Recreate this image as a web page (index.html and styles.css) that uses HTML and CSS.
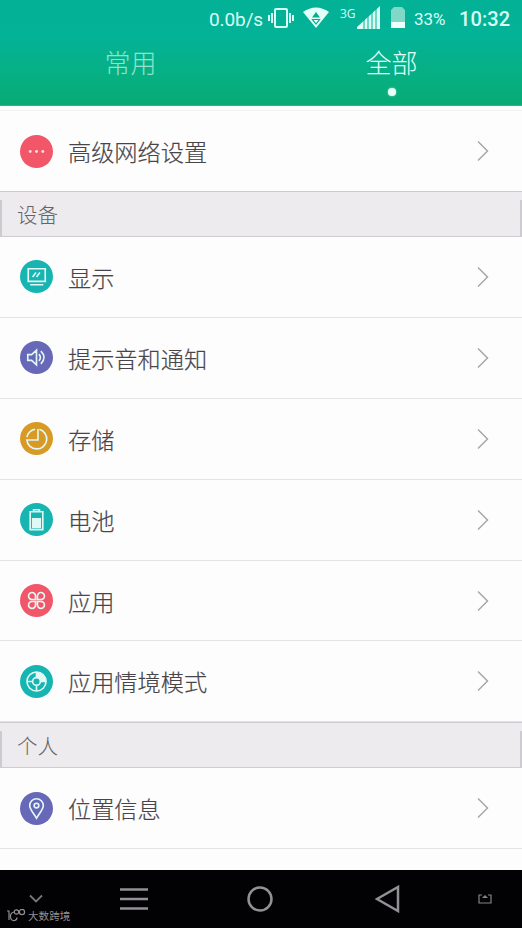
FILE: index.html
```html
<!DOCTYPE html>
<html lang="zh-CN">
<head>
<meta charset="utf-8">
<title>设置</title>
<link rel="stylesheet" href="styles.css">
</head>
<body>
<svg class="defs" width="0" height="0"><defs><symbol id="chevron" viewBox="0 0 12 22"><path d="M1 1.500 10.500 11 1 20.500"/></symbol></defs></svg>
<header class="header">
  <div class="status">
    <span class="rate">0.0b/s</span>
    <svg class="vibrate" width="26" height="20" viewBox="0 0 26 20" fill="none" stroke="#d6fff5" stroke-width="2"><rect x="7" y="1" width="12" height="18" rx="1"/><path d="M4 5v10M1 7v6M22 5v10M25 7v6"/></svg>
    <svg class="wifi" width="26" height="21" viewBox="0 0 26 21"><path fill="#e2fff8" d="M0 5Q13-4 26 5L13 21Z"/><path fill="#05ae93" d="M9 10.500 13 5l4 5.500Z"/><path fill="none" stroke="#05ae93" stroke-width="1.200" d="M9.500 12.500h7L13 17Z"/></svg>
    <span class="network">3G</span>
    <svg class="signal" width="23" height="23" viewBox="0 0 23 23"><path fill="#d9fff5" d="M0 23V21L23 0V23Z"/><path stroke="#05ae93" stroke-width="1" d="M7 10v13M11 7v16M15 4v19M19 0v23"/></svg>
    <svg class="charge" width="14" height="21" viewBox="0 0 14 21"><path fill="#80d8c7" d="M0 3 3 0h8l3 3v12H0Z"/><path fill="#effffb" d="M0 15h14v6H0z"/></svg>
    <span class="percent">33%</span>
    <span class="clock">10:32</span>
  </div>
  <nav class="tabs"><div class="tab">常用</div><div class="tab active">全部</div></nav>
</header>
<main class="list">
  <div class="row first">
    <svg class="icon red" viewBox="0 0 34 34"><g fill="#ffd9dc" stroke="none"><circle cx="10.500" cy="17" r="1.500"/><circle cx="17" cy="17" r="1.500"/><circle cx="23.500" cy="17" r="1.500"/></g></svg>
    <span class="label">高级网络设置</span><svg class="chevron"><use href="#chevron"/></svg>
  </div>
  <h2 class="section">设备</h2>
  <div class="row">
    <svg class="icon teal" viewBox="0 0 34 34"><path d="M8.500 9h17.500v13h-17.500ZM10.500 25.500h13.500M13 17.500l3.500-4.500M17 17.500l3.500-4.500"/></svg>
    <span class="label">显示</span><svg class="chevron"><use href="#chevron"/></svg>
  </div>
  <div class="row">
    <svg class="icon violet" viewBox="0 0 34 34"><path d="M8 14h4l5-4.500v15L12 20H8ZM19.500 13.500q3 3.500 0 7M21.500 10.500q6.500 6.500 0 13"/></svg>
    <span class="label">提示音和通知</span><svg class="chevron"><use href="#chevron"/></svg>
  </div>
  <div class="row">
    <svg class="icon amber" viewBox="0 0 34 34"><path d="M20 7.500A10.300 10.300 0 1 1 7 18.500H18.500V7.200M7.200 15.500Q8.500 9 15.500 7.500"/></svg>
    <span class="label">存储</span><svg class="chevron"><use href="#chevron"/></svg>
  </div>
  <div class="row">
    <svg class="icon teal" viewBox="0 0 34 34"><path d="M10.500 9h13v18.500h-13ZM14 9V7h6v2"/><path class="solid" d="M12.300 15.500h9.400v10.400h-9.400z"/></svg>
    <span class="label">电池</span><svg class="chevron"><use href="#chevron"/></svg>
  </div>
  <div class="row">
    <svg class="icon red" viewBox="0 0 34 34"><path d="M16 16h-3.500A3.600 3.600 0 1 1 16 12.500ZM18 16v-3.500A3.600 3.600 0 1 1 21.500 16ZM16 18v3.500A3.600 3.600 0 1 1 12.500 18ZM18 18h3.500A3.600 3.600 0 1 1 18 21.500Z"/></svg>
    <span class="label">应用</span><svg class="chevron"><use href="#chevron"/></svg>
  </div>
  <div class="row">
    <svg class="icon teal" viewBox="0 0 34 34"><circle cx="17" cy="17" r="9.800"/><circle cx="17" cy="17" r="4"/><path d="M17 7.500V13M7.500 17H13M17 21v5.500M21 17h5.500"/><path class="solid" d="M17 7.200A9.800 9.800 0 0 1 26.800 17H21A4 4 0 0 0 17 13Z"/></svg>
    <span class="label">应用情境模式</span><svg class="chevron"><use href="#chevron"/></svg>
  </div>
  <h2 class="section">个人</h2>
  <div class="row">
    <svg class="icon violet" viewBox="0 0 34 34"><path d="M17 27C14 22 10 18 10 14a7 7 0 0 1 14 0C24 18 20 22 17 27Z"/><circle cx="17" cy="14" r="2.400"/></svg>
    <span class="label">位置信息</span><svg class="chevron"><use href="#chevron"/></svg>
  </div>
</main>
<footer class="navbar">
  <div class="corner">
    <svg class="down" width="14" height="9" viewBox="0 0 14 9"><path d="M1 1.500 7 7.500l6-6"/></svg>
    <div class="brand"><svg width="19" height="13" viewBox="0 0 19 13"><path d="M0 2h2v9M7 3Q3 4 3.500 8q.5 4 4 3.500 2.500-.5 2.500-3"/><circle cx="9.500" cy="3" r="2.200"/><circle cx="15" cy="3" r="2.600"/></svg><span>大数跨境</span></div>
  </div>
  <svg class="menu" width="28" height="22" viewBox="0 0 28 22"><path d="M0 1.500h28M0 11h28M0 20.500h28"/></svg>
  <svg class="home" width="26" height="26" viewBox="0 0 26 26"><circle cx="13" cy="13" r="11.500"/></svg>
  <svg class="back" width="25" height="28" viewBox="0 0 25 28"><path d="M23 2v24L2 14Z"/></svg>
  <svg class="tray" width="14" height="10" viewBox="0 0 14 10"><path d="M4 1H1v8h12V1h-3"/><path class="arrow" d="M4 4 7 1l3 3Z"/></svg>
</footer>
</body>
</html>
```
FILE: styles.css
```css
* { box-sizing: border-box; }
body {
  margin: 0;
  width: 522px;
  height: 928px;
  display: flex;
  flex-direction: column;
  overflow: hidden;
  background: #fefdfe;
  font-family: "Noto Sans CJK SC", sans-serif;
  font-weight: 300;
}
.defs { position: absolute; }
.header {
  height: 106px;
  background: linear-gradient(#03b197 0, #04b297 36px, #06b083 75px, #08aa74 105px);
  border-bottom: 1px solid #45a98a;
}
.status {
  height: 38px;
  display: flex;
  align-items: center;
  padding-left: 209px;
  color: #d8fff6;
  font-family: Roboto, sans-serif;
  white-space: nowrap;
}
.status svg { flex: none; }
.rate { width: 59px; font-size: 19px; font-weight: 400; letter-spacing: -.1px; }
.vibrate { margin-top: -3px; }
.wifi { margin: -3px 0 0 9px; }
.network { width: 17px; margin: -12px 0 0 11px; font: 12px "Open Sans", sans-serif; }
.signal { margin-top: -3px; }
.charge { margin: -3px 0 0 11px; }
.percent { width: 45px; margin-left: 9px; font-size: 17px; font-weight: 400; }
.clock { font-size: 20px; font-weight: 500; letter-spacing: .1px; }
.tabs { display: grid; grid-template-columns: 1fr 1fr; height: 66px; }
.tab {
  display: flex;
  flex-direction: column;
  align-items: center;
  color: #91e2ca;
  font-size: 26px;
  line-height: 48px;
}
.active { color: #e4fff7; }
.active::after {
  content: "";
  width: 8px;
  height: 8px;
  margin-top: 2px;
  border-radius: 50%;
  background: #e9fff7;
  box-shadow: 0 0 2px #a6ead3;
}
.list { flex: 1; padding-top: 4px; }
.row {
  height: 80.900px;
  display: flex;
  align-items: center;
  padding: 0 32px 0 20px;
  border-bottom: 1px solid #e5e3e7;
}
.first { height: 81px; border-top: 1px solid #eef2f2; border-bottom: 0; }
.icon {
  width: 33px;
  height: 33px;
  flex: none;
  border-radius: 50%;
  fill: none;
  stroke: #e0f9f5;
  stroke-width: 1.700;
}
.icon .solid { fill: #e0f9f5; stroke: none; }
.red { background: #f25769; }
.teal { background: #17b5b2; }
.violet { background: #6768b8; }
.amber { background: #d99a25; }
.label { flex: 1; margin-left: 15px; font-size: 23.200px; line-height: 34px; color: #48454a; -webkit-text-stroke: .2px #48454a; }
.chevron { width: 12px; height: 22px; margin-right: 1px; fill: none; stroke: #a9a6ab; stroke-width: 1.500; }
.section {
  height: 46px;
  margin: 0;
  padding-left: 17px;
  border-top: 1px solid #cecbd0;
  border-bottom: 1px solid #cfccd1;
  background:
    linear-gradient(#cdcbd0, #cdcbd0) left bottom / 2px 36px no-repeat,
    linear-gradient(#cdcbd0, #cdcbd0) right bottom / 2px 36px no-repeat,
    #edebee;
  color: #666368;
  font-size: 20.500px;
  font-weight: 300;
  line-height: 44px;
}
.navbar {
  height: 58px;
  flex: none;
  display: flex;
  align-items: center;
  background: #020104;
}
.navbar svg { flex: none; fill: none; stroke: #929093; stroke-width: 2.500; }
.corner { width: 120px; padding: 20px 0 0 7px; }
.corner .down { display: block; margin-left: 22px; stroke: #777; stroke-width: 1.800; }
.brand { display: flex; align-items: center; height: 18px; margin-top: 4px; gap: 2px; color: #929093; font-size: 10.600px; font-weight: 400; }
.brand svg { stroke-width: 1.200; }
.home { margin-left: 99px; }
.back { margin-left: 102px; }
.navbar .tray { margin-left: 78px; stroke: #858386; stroke-width: 1.200; }
.tray .arrow { fill: #858386; stroke: none; }
```
